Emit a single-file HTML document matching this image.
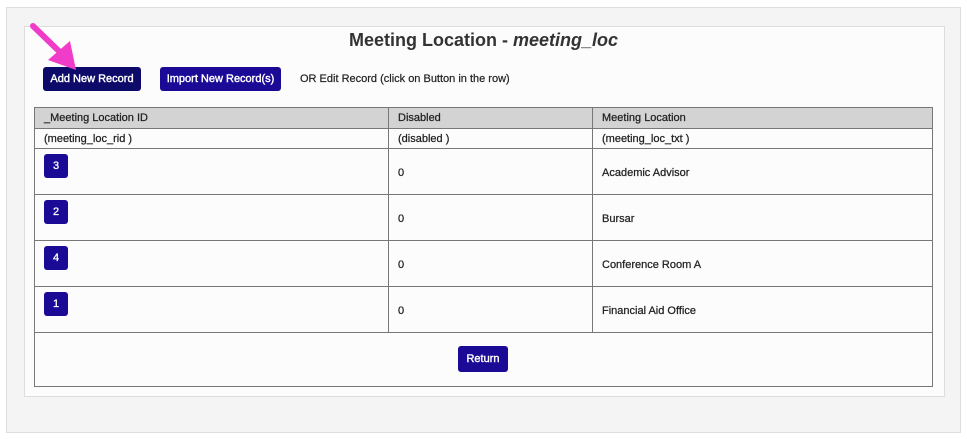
<!DOCTYPE html>
<html><head><style>
body{margin:0;width:967px;height:439px;background:#fff;font-family:"Liberation Sans",Arial,sans-serif;position:relative;overflow:hidden}
.outer{position:absolute;left:6px;top:7px;width:953px;height:424px;background:#f4f4f4;border:1px solid #ddd}
.inner{position:absolute;left:24px;top:26px;width:919px;height:369px;background:#fcfcfc;border:1px solid #ddd}
.title{position:absolute;left:0;width:967px;top:30px;text-align:center;font-size:18px;font-weight:bold;color:#333}
.btn{position:absolute;background:#1a0a96;color:#fff;font-size:11px;-webkit-text-stroke:0.4px #fff;border-radius:3px;text-align:center;line-height:24px}
table{position:absolute;left:34px;top:107px;width:899px;border-collapse:collapse;font-size:11px;color:#222;-webkit-text-stroke:0.25px #222}
td{border:1px solid #777;padding:0 9px;vertical-align:middle}
.h td{background:#d3d3d3;height:20px}
.s td{height:19px}
.d td{height:43px;position:relative;padding-top:2px}
.n{position:absolute;left:9px;top:5px;background:#1a0a96;color:#fff;width:24px;height:24px;line-height:24px;text-align:center;border-radius:3px;-webkit-text-stroke:0.3px #fff}
</style></head><body>
<div class="outer"></div><div class="inner"></div>
<div class="title">Meeting Location - <i>meeting_loc</i></div>
<div class="btn" style="left:43px;top:67px;width:98px;background:#0d0a6a">Add New Record</div>
<div class="btn" style="left:160px;top:67px;width:121px">Import New Record(s)</div>
<div style="position:absolute;left:300px;top:73px;font-size:11px;color:#222;-webkit-text-stroke:0.2px #222">OR Edit Record (click on Button in the row)</div>
<svg style="position:absolute;left:0;top:0" width="100" height="100"><line x1="33" y1="26" x2="64" y2="56" stroke="#f03cc8" stroke-width="6" stroke-linecap="round"/><polygon points="48,60 76,70 70,41" fill="#f03cc8"/></svg>
<table>
<tr class="h"><td style="width:335px">_Meeting Location ID</td><td style="width:185px">Disabled</td><td>Meeting Location</td></tr>
<tr class="s"><td>(meeting_loc_rid )</td><td>(disabled )</td><td>(meeting_loc_txt )</td></tr>
<tr class="d"><td><span class="n">3</span></td><td>0</td><td>Academic Advisor</td></tr>
<tr class="d"><td><span class="n">2</span></td><td>0</td><td>Bursar</td></tr>
<tr class="d"><td><span class="n">4</span></td><td>0</td><td>Conference Room A</td></tr>
<tr class="d"><td><span class="n">1</span></td><td>0</td><td>Financial Aid Office</td></tr>
<tr><td colspan="3" style="height:53px"></td></tr>
</table>
<div class="btn" style="left:458px;top:346px;width:50px;height:26px;line-height:26px">Return</div>
</body></html>
